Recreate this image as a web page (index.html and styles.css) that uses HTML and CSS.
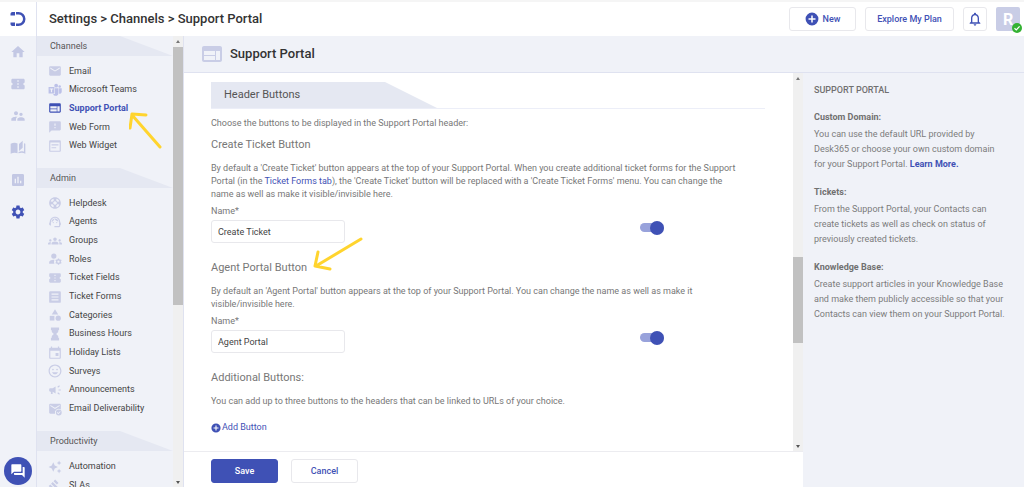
FILE: index.html
```html
<!DOCTYPE html>
<html lang="en">
<head>
<meta charset="utf-8">
<meta name="viewport" content="width=device-width, initial-scale=1">
<title>Support Portal</title>
<link rel="stylesheet" href="styles.css">
</head>
<body>
<svg class="sprite" aria-hidden="true">
  <symbol id="i-home" viewBox="0 0 24 24"><path d="M10 20v-6h4v6h5v-8h3L12 3 2 12h3v8z"/></symbol>
  <symbol id="i-ticket" viewBox="0 0 24 24"><path d="M22 10V6c0-1.11-.9-2-2-2H4c-1.1 0-2 .89-2 2v4c1.1 0 2 .9 2 2s-.9 2-2 2v4c0 1.1.9 2 2 2h16c1.1 0 2-.9 2-2v-4c-1.1 0-2-.9-2-2s.9-2 2-2zm-9 7.500h-2v-2h2v2zm0-4.500h-2v-2h2v2zm0-4.500h-2v-2h2v2z"/></symbol>
  <symbol id="i-people" viewBox="0 0 24 24"><path d="M16.500 12c1.380 0 2.490-1.120 2.490-2.500S17.880 7 16.500 7 14 8.120 14 9.500s1.120 2.500 2.500 2.500zM9 11c1.660 0 2.990-1.340 2.990-3S10.660 5 9 5 6 6.340 6 8s1.340 3 3 3zm7.500 3c-1.830 0-5.500.920-5.500 2.750V19h11v-2.250c0-1.830-3.670-2.750-5.500-2.750zM9 13c-2.330 0-7 1.170-7 3.500V19h7v-2.250c0-.850.330-2.340 2.370-3.470C10.500 13.100 9.660 13 9 13z"/></symbol>
  <symbol id="i-book" viewBox="0 0 24 24"><path d="M1 5.500C3 4.500 5 4 7 4c1.500 0 3 .400 4.300 1.200V20C10 19.300 8.500 19 7 19c-2 0-4 .500-6 1.500zM19 1l-5.500 5v10.500L19 11.500zM21 4.800v12.700c-1.100-.400-2.300-.500-3.500-.500-1.700 0-3.500.500-4.800 1.300V20c1.500-.800 3.200-1 4.800-1 1.900 0 3.800.500 5.500 1.500V5.800c-.600-.400-1.300-.800-2-1z"/></symbol>
  <symbol id="i-chart" viewBox="0 0 24 24"><path d="M19 3H5c-1.100 0-2 .9-2 2v14c0 1.100.9 2 2 2h14c1.100 0 2-.9 2-2V5c0-1.100-.9-2-2-2zM9 17H7v-7h2v7zm4 0h-2V7h2v10zm4 0h-2v-4h2v4z"/></symbol>
  <symbol id="i-gear" viewBox="0 0 24 24"><path d="M19.140 12.940c.040-.300.060-.610.060-.940 0-.320-.020-.640-.070-.940l2.030-1.580c.180-.140.230-.410.120-.610l-1.920-3.320c-.120-.220-.370-.290-.590-.220l-2.390.960c-.500-.380-1.030-.700-1.620-.940l-.360-2.540c-.040-.240-.240-.410-.480-.410h-3.840c-.240 0-.430.170-.470.410l-.360 2.540c-.590.240-1.130.570-1.620.940l-2.390-.960c-.220-.080-.470 0-.590.220L2.740 8.870c-.120.210-.080.470.120.610l2.030 1.580c-.050.300-.090.630-.090.940s.020.640.070.940l-2.030 1.580c-.180.140-.230.410-.120.610l1.920 3.320c.120.220.370.290.590.220l2.390-.960c.500.380 1.030.700 1.620.940l.360 2.540c.050.240.240.410.480.410h3.840c.240 0 .440-.170.470-.410l.360-2.540c.590-.240 1.130-.560 1.620-.940l2.390.960c.220.080.470 0 .590-.220l1.920-3.320c.120-.220.070-.470-.120-.610l-2.010-1.580zM12 15.600c-1.980 0-3.600-1.620-3.600-3.600s1.620-3.600 3.600-3.600 3.600 1.620 3.600 3.600-1.620 3.600-3.600 3.600z"/></symbol>
  <symbol id="i-mail" viewBox="0 0 24 24"><path d="M20 4H4c-1.100 0-2 .9-2 2v12c0 1.100.9 2 2 2h16c1.100 0 2-.9 2-2V6c0-1.100-.9-2-2-2zm0 4l-8 5-8-5V6l8 5 8-5v2z"/></symbol>
  <symbol id="i-teams" viewBox="0 0 24 24"><path fill-rule="evenodd" d="M1 7h10v11H1zM3 9.300v1.800h2V16h2v-4.900h2V9.300z"/><circle cx="14" cy="4.500" r="3.200"/><circle cx="20" cy="6" r="2.200"/><path d="M12 9h6v8c0 3-2 5-4.500 5S9.500 21.500 9 19h3zM19 9h4.500v6c0 2-1.500 3.500-4.500 3.500z"/></symbol>
  <symbol id="i-web" viewBox="0 0 24 24"><path d="M20 4H4c-1.100 0-2 .9-2 2v12c0 1.100.9 2 2 2h16c1.100 0 2-.9 2-2V6c0-1.100-.9-2-2-2zm-5 14H4v-4h11v4zm0-5H4V9h11v4zm5 5h-4V9h4v9z"/></symbol>
  <symbol id="i-feedback" viewBox="0 0 24 24"><path d="M20 2H4c-1.100 0-2 .9-2 2v18l4-4h14c1.100 0 2-.9 2-2V4c0-1.100-.9-2-2-2zm-7 12h-2v-2h2v2zm0-4h-2V6h2v4z"/></symbol>
  <symbol id="i-widget" viewBox="0 0 24 24"><path d="M20 2H4c-1.100 0-2 .9-2 2v16c0 1.100.9 2 2 2h16c1.100 0 2-.9 2-2V4c0-1.100-.9-2-2-2zm0 18H4V6h16v14zm-2-9H6V9h12v2zm-4 5H6v-2h8v2z"/></symbol>
  <symbol id="i-support" viewBox="0 0 24 24"><path d="M12 2C6.480 2 2 6.480 2 12s4.480 10 10 10 10-4.480 10-10S17.520 2 12 2zm7.460 7.120l-2.780 1.150c-.510-1.360-1.580-2.440-2.950-2.940l1.150-2.780c2.100.800 3.770 2.470 4.580 4.570zM12 15c-1.660 0-3-1.340-3-3s1.340-3 3-3 3 1.340 3 3-1.340 3-3 3zM9.130 4.540l1.170 2.780c-1.380.500-2.470 1.590-2.980 2.970L4.540 9.130c.810-2.110 2.480-3.780 4.590-4.590zM4.540 14.870l2.780-1.150c.510 1.380 1.590 2.460 2.970 2.960l-1.170 2.780c-2.100-.810-3.770-2.480-4.580-4.590zm10.340 4.590l-1.150-2.780c1.370-.510 2.450-1.590 2.950-2.970l2.780 1.170c-.810 2.100-2.480 3.770-4.580 4.580z"/></symbol>
  <symbol id="i-agent" viewBox="0 0 24 24"><path d="M21 12.220C21 6.730 16.740 3 12 3c-4.690 0-9 3.650-9 9.280-.600.340-1 .980-1 1.720v2c0 1.100.9 2 2 2h1v-6.100c0-3.870 3.130-7 7-7s7 3.130 7 7V19h-8v2h8c1.100 0 2-.9 2-2v-1.220c.590-.310 1-.920 1-1.640v-2.300c0-.700-.410-1.310-1-1.620z"/><circle cx="9" cy="13" r="1"/><circle cx="15" cy="13" r="1"/><path d="M18 11.030C17.520 8.180 15.040 6 12.050 6c-3.030 0-6.290 2.510-6.030 6.450 2.470-1.010 4.330-3.210 4.860-5.890 1.310 2.630 4 4.440 7.120 4.470z"/></symbol>
  <symbol id="i-groups" viewBox="0 0 24 24"><path d="M12 12.750c1.630 0 3.070.390 4.240.900 1.080.480 1.760 1.560 1.760 2.730V18H6v-1.610c0-1.180.680-2.260 1.760-2.730 1.170-.520 2.610-.910 4.240-.910zM4 13c1.100 0 2-.9 2-2s-.9-2-2-2-2 .9-2 2 .9 2 2 2zm1.130 1.100C4.760 14.040 4.390 14 4 14c-.990 0-1.930.210-2.780.580C.480 14.900 0 15.620 0 16.430V18h4.500v-1.610c0-.830.230-1.610.630-2.290zM20 13c1.100 0 2-.9 2-2s-.9-2-2-2-2 .9-2 2 .9 2 2 2zm4 3.430c0-.810-.480-1.530-1.220-1.850C21.930 14.210 20.990 14 20 14c-.390 0-.760.040-1.130.100.400.680.630 1.460.630 2.290V18H24v-1.570zM12 6c1.660 0 3 1.340 3 3s-1.340 3-3 3-3-1.340-3-3 1.340-3 3-3z"/></symbol>
  <symbol id="i-roles" viewBox="0 0 24 24"><circle cx="10" cy="7" r="4.500"/><path d="M11 13.200C6 12.700 2 15 2 17.500V20h9c-.900-2.200-.800-4.600 0-6.800z"/><path fill-rule="evenodd" d="M17 11h2l.4 1.600 1.300.7 1.600-.5 1 1.700-1.200 1.200v1.500l1.200 1.200-1 1.700-1.600-.4-1.300.7L19 22h-2l-.4-1.600-1.300-.7-1.600.4-1-1.700 1.200-1.200v-1.500l-1.200-1.200 1-1.700 1.600.5 1.300-.7zm1 3.500a2 2 0 100 4 2 2 0 000-4z"/></symbol>
  <symbol id="i-forms" viewBox="0 0 24 24"><path fill-rule="evenodd" d="M4 2h16a2 2 0 012 2v16a2 2 0 01-2 2H4a2 2 0 01-2-2V4a2 2 0 012-2zm2 4v2h12V6zm0 5v2h12v-2zm0 5v2h12v-2z"/></symbol>
  <symbol id="i-category" viewBox="0 0 24 24"><path d="M12 2l-5.500 9h11z"/><circle cx="17.500" cy="17.500" r="4.500"/><path d="M3 13.500h8v8H3z"/></symbol>
  <symbol id="i-hourglass" viewBox="0 0 24 24"><path d="M5 1h14v4.500h-1.500v3L14 12l3.500 3.500v3H19V23H5v-4.500h1.500v-3L10 12 6.500 8.500v-3H5z"/></symbol>
  <symbol id="i-event" viewBox="0 0 24 24"><path d="M18 12h-5v5h5v-5zM17 1v2H7V1H5v2H4c-1.110 0-2 .9-2 2v15c0 1.100.890 2 2 2h16c1.100 0 2-.9 2-2V5c0-1.100-.9-2-2-2h-1V1h-2zm3 19H4V8h16v12z"/></symbol>
  <symbol id="i-smile" viewBox="0 0 24 24"><path d="M11.990 1C5.900 1 1 5.900 1 12s4.900 11 10.990 11C18.100 23 23 18.100 23 12S18.100 1 11.990 1zM12 21c-5 0-9-4-9-9s4-9 9-9 9 4 9 9-4 9-9 9zm3.500-10c.830 0 1.500-.670 1.500-1.500S16.330 8 15.500 8 14 8.670 14 9.500s.670 1.500 1.500 1.500zm-7 0c.830 0 1.500-.670 1.500-1.500S9.330 8 8.500 8 7 8.670 7 9.500 7.670 11 8.500 11zm3.500 6.500c2.330 0 4.310-1.460 5.110-3.500H6.890c.800 2.040 2.780 3.500 5.110 3.500z"/></symbol>
  <symbol id="i-campaign" viewBox="0 0 24 24"><path d="M18 11v2h4v-2h-4zm-2 6.610c.960.710 2.210 1.650 3.200 2.390.400-.530.800-1.070 1.200-1.600-.990-.740-2.240-1.680-3.200-2.400-.400.540-.800 1.080-1.200 1.610zM20.400 5.600c-.400-.530-.800-1.070-1.200-1.600-.990.740-2.240 1.680-3.200 2.400.400.530.800 1.070 1.200 1.600.960-.720 2.210-1.650 3.200-2.400zM4 9c-1.100 0-2 .9-2 2v2c0 1.100.9 2 2 2h1v4h3v-4l5 3V6L8 9H4z"/></symbol>
  <symbol id="i-mailcheck" viewBox="0 0 24 24"><path d="M20 3H4a2 2 0 00-2 2v13c0 1.100.9 2 2 2h8a6.500 6.500 0 0110-7V5a2 2 0 00-2-2zm0 4l-8 5-8-5V5l8 5 8-5z"/><path fill-rule="evenodd" d="M18.500 13a5 5 0 100 10 5 5 0 000-10zm-.8 7.800L15 18.200l1-1 1.700 1.600 3-3 1 1z"/></symbol>
  <symbol id="i-sparkle" viewBox="0 0 24 24"><path d="M19 9l1.250-2.750L23 5l-2.750-1.250L19 1l-1.250 2.750L15 5l2.750 1.250L19 9zm0 6l-1.250 2.750L15 19l2.750 1.250L19 23l1.250-2.750L23 19l-2.750-1.250L19 15zm-7.500-5.500L9 4 6.500 9.500 1 12l5.500 2.500L9 20l2.500-5.500L17 12l-5.500-2.500z"/></symbol>
  <symbol id="i-gavel" viewBox="0 0 24 24"><path d="M5.200 8l2.900-2.900 14.200 14.200-2.900 2.900zM12.300 1l5.700 5.700-2.900 2.800-5.600-5.700zM4 9.300L9.700 15l-2.900 2.800-5.600-5.700zM1 21h12v2H1z"/></symbol>
  <symbol id="i-bell" viewBox="0 0 24 24"><path d="M12 22c1.100 0 2-.9 2-2h-4c0 1.100.9 2 2 2zm6-6v-5c0-3.070-1.630-5.640-4.500-6.320V4c0-.830-.670-1.500-1.500-1.500s-1.500.670-1.500 1.500v.680C7.640 5.360 6 7.920 6 11v5l-2 2v1h16v-1l-2-2zm-2 1H8v-6c0-2.480 1.510-4.500 4-4.500s4 2.020 4 4.500v6z"/></symbol>
  <symbol id="i-plus" viewBox="0 0 24 24"><path d="M12 1a11 11 0 100 22 11 11 0 000-22zm6 12.300h-4.700V18h-2.600v-4.700H6v-2.600h4.700V6h2.600v4.700H18z"/></symbol>
  <symbol id="i-forum" viewBox="0 0 24 24"><path d="M21 6h-2v9H6v2c0 .550.450 1 1 1h11l4 4V7c0-.550-.450-1-1-1zm-4 6V3c0-.550-.450-1-1-1H3c-.550 0-1 .450-1 1v14l4-4h10c.550 0 1-.450 1-1z"/></symbol>
</svg>

<div class="app">
  <header class="topbar">
    <a class="logo" href="#" aria-label="Desk365 home">
      <svg viewBox="0 0 16 16" aria-hidden="true"><path d="M.5 4.500V3C.5 1.800 1.300 1 2.500 1H5v3.500zM6 1h2.500a7 7 0 010 14H6v-2.500h2.500a4.500 4.500 0 000-9H6zM.5 11.500H5V15H2.500c-1.200 0-2-.8-2-2z"/></svg>
    </a>
    <h1 class="crumbs">Settings &gt; Channels &gt; Support Portal</h1>
    <div class="actions">
      <button class="btn btn-new" type="button"><svg class="icon" aria-hidden="true"><use href="#i-plus"/></svg>New</button>
      <button class="btn btn-plan" type="button">Explore My Plan</button>
      <button class="btn btn-bell" type="button" aria-label="Notifications"><svg class="icon" aria-hidden="true"><use href="#i-bell"/></svg></button>
      <button class="avatar" type="button">R
        <svg class="badge" viewBox="0 0 10 10" aria-hidden="true"><circle cx="5" cy="5" r="5"/><path d="M2.500 5.200l1.800 1.700 3.300-3.600"/></svg>
      </button>
    </div>
  </header>

  <div class="body">
    <nav class="rail" aria-label="Main">
      <a href="#" aria-label="Home"><svg class="icon"><use href="#i-home"/></svg></a>
      <a href="#" aria-label="Tickets"><svg class="icon"><use href="#i-ticket"/></svg></a>
      <a href="#" aria-label="Contacts"><svg class="icon"><use href="#i-people"/></svg></a>
      <a href="#" aria-label="Knowledge base"><svg class="icon"><use href="#i-book"/></svg></a>
      <a href="#" aria-label="Reports"><svg class="icon"><use href="#i-chart"/></svg></a>
      <a class="active" href="#" aria-label="Settings"><svg class="icon"><use href="#i-gear"/></svg></a>
      <button class="chat" type="button" aria-label="Chat"><svg class="icon"><use href="#i-forum"/></svg></button>
    </nav>

    <nav class="sidebar" aria-label="Settings">
      <div class="menu">
        <h2 class="band">Channels</h2>
        <ul class="list list-short">
          <li><a href="#"><svg class="icon"><use href="#i-mail"/></svg>Email</a></li>
          <li><a href="#"><svg class="icon teams"><use href="#i-teams"/></svg>Microsoft Teams</a></li>
          <li><a class="active" href="#"><svg class="icon"><use href="#i-web"/></svg>Support Portal</a></li>
          <li><a href="#"><svg class="icon"><use href="#i-feedback"/></svg>Web Form</a></li>
          <li><a href="#"><svg class="icon"><use href="#i-widget"/></svg>Web Widget</a></li>
        </ul>
        <h2 class="band">Admin</h2>
        <ul class="list list-long">
          <li><a href="#"><svg class="icon"><use href="#i-support"/></svg>Helpdesk</a></li>
          <li><a href="#"><svg class="icon"><use href="#i-agent"/></svg>Agents</a></li>
          <li><a href="#"><svg class="icon"><use href="#i-groups"/></svg>Groups</a></li>
          <li><a href="#"><svg class="icon"><use href="#i-roles"/></svg>Roles</a></li>
          <li><a href="#"><svg class="icon"><use href="#i-ticket"/></svg>Ticket Fields</a></li>
          <li><a href="#"><svg class="icon"><use href="#i-forms"/></svg>Ticket Forms</a></li>
          <li><a href="#"><svg class="icon"><use href="#i-category"/></svg>Categories</a></li>
          <li><a href="#"><svg class="icon"><use href="#i-hourglass"/></svg>Business Hours</a></li>
          <li><a href="#"><svg class="icon"><use href="#i-event"/></svg>Holiday Lists</a></li>
          <li><a href="#"><svg class="icon"><use href="#i-smile"/></svg>Surveys</a></li>
          <li><a href="#"><svg class="icon"><use href="#i-campaign"/></svg>Announcements</a></li>
          <li><a href="#"><svg class="icon"><use href="#i-mailcheck"/></svg>Email Deliverability</a></li>
        </ul>
        <h2 class="band">Productivity</h2>
        <ul class="list list-tail">
          <li><a href="#"><svg class="icon"><use href="#i-sparkle"/></svg>Automation</a></li>
          <li><a href="#"><svg class="icon"><use href="#i-gavel"/></svg>SLAs</a></li>
        </ul>
      </div>
      <div class="scroll scroll-side" aria-hidden="true"><span class="up"></span><span class="track"><span class="thumb"></span></span><span class="down"></span></div>
    </nav>

    <main class="page">
      <div class="titlebar"><svg class="icon" aria-hidden="true"><use href="#i-web"/></svg><h2>Support Portal</h2></div>
      <div class="split">
        <form class="editor">
          <div class="pane">
            <div class="fields">
              <div class="tab"><h3>Header Buttons</h3></div>
              <p class="intro">Choose the buttons to be displayed in the Support Portal header:</p>

              <h4>Create Ticket Button</h4>
              <p>By default a 'Create Ticket' button appears at the top of your Support Portal. When you create additional ticket forms for the Support Portal (in the <a href="#">Ticket Forms tab</a>), the 'Create Ticket' button will be replaced with a 'Create Ticket Forms' menu. You can change the name as well as make it visible/invisible here.</p>
              <label class="name" for="create-name">Name*</label>
              <div class="row">
                <input class="text" id="create-name" type="text" value="Create Ticket">
                <input class="switch" type="checkbox" role="switch" aria-label="Show Create Ticket button" checked>
              </div>

              <h4>Agent Portal Button</h4>
              <p>By default an 'Agent Portal' button appears at the top of your Support Portal. You can change the name as well as make it visible/invisible here.</p>
              <label class="name" for="agent-name">Name*</label>
              <div class="row">
                <input class="text" id="agent-name" type="text" value="Agent Portal">
                <input class="switch" type="checkbox" role="switch" aria-label="Show Agent Portal button" checked>
              </div>

              <h4>Additional Buttons:</h4>
              <p>You can add up to three buttons to the headers that can be linked to URLs of your choice.</p>
              <button class="add" type="button"><svg class="icon" aria-hidden="true"><use href="#i-plus"/></svg>Add Button</button>
            </div>
            <div class="scroll scroll-main" aria-hidden="true"><span class="up"></span><span class="track"><span class="thumb"></span></span><span class="down"></span></div>
          </div>
          <div class="footer">
            <button class="btn save" type="button">Save</button>
            <button class="btn cancel" type="button">Cancel</button>
          </div>
        </form>
        <aside class="help">
          <h3>SUPPORT PORTAL</h3>
          <h4>Custom Domain:</h4>
          <p>You can use the default URL provided by Desk365 or choose your own custom domain for your Support Portal. <a href="#">Learn More.</a></p>
          <h4>Tickets:</h4>
          <p>From the Support Portal, your Contacts can create tickets as well as check on status of previously created tickets.</p>
          <h4>Knowledge Base:</h4>
          <p>Create support articles in your Knowledge Base and make them publicly accessible so that your Contacts can view them on your Support Portal.</p>
        </aside>
      </div>
    </main>
  </div>
</div>

<svg class="arrow arrow-nav" viewBox="0 0 34 40" aria-hidden="true"><path d="M31 36L3 4M1 17L3 3L17 4"/></svg>
<svg class="arrow arrow-heading" viewBox="0 0 52 36" aria-hidden="true"><path d="M48 3L3 30M5 16L2 30L17 33"/></svg>
</body>
</html>
```
FILE: styles.css
```css
:root {
  --blue: #3f51b5;
  --pale: #f0f2f8;
  --band: #e5e8f2;
  --line: #dfe2f0;
  --icon: #c9cde6;
}

* { box-sizing: border-box; }

body {
  margin: 0;
  font: 9px/13px Roboto, "Liberation Sans", sans-serif;
  color: #777;
  background: #fff;
}

h1, h2, h3, h4, p, ul { margin: 0; padding: 0; font-weight: 400; }
a { color: var(--blue); text-decoration: none; }
button, input { font: inherit; margin: 0; }
button { cursor: pointer; }
.sprite { position: absolute; width: 0; height: 0; }
.icon { width: 14px; height: 14px; flex: none; fill: currentColor; }

.app { display: flex; flex-direction: column; height: 100vh; overflow: hidden; }

.topbar {
  display: flex;
  align-items: center;
  flex: none;
  height: 36px;
  padding-right: 4px;
  border-top: 2px solid #f5f5f5;
}
.logo {
  display: flex;
  align-items: center;
  justify-content: center;
  align-self: stretch;
  width: 37px;
  border-right: 1px solid var(--line);
}
.logo svg { width: 16px; height: 16px; fill: var(--blue); }
.crumbs { flex: 1; padding-left: 12px; font-size: 13px; line-height: 20px; font-weight: 500; color: #333; }
.actions { display: flex; gap: 9px; }
.btn {
  display: flex;
  align-items: center;
  justify-content: center;
  height: 24px;
  padding: 0;
  border: 1px solid #e8e8ec;
  border-radius: 3px;
  background: #fff;
  color: var(--blue);
  font-weight: 500;
}
.btn-new { width: 67px; gap: 4px; }
.btn-plan { width: 89px; }
.btn-bell { width: 24px; }
.btn-bell .icon { width: 16px; height: 16px; }
.avatar {
  position: relative;
  width: 24px;
  height: 24px;
  padding: 0;
  border: 0;
  border-radius: 2px;
  background: #c9cde6;
  color: #fff;
  font-size: 16px;
  font-weight: 700;
}
.badge { position: absolute; right: -2px; bottom: -2px; width: 10px; height: 10px; }
.badge circle { fill: #34b233; }
.badge path { fill: none; stroke: #fff; stroke-width: 1.2; }

.body { display: flex; flex: 1; min-height: 0; }

.rail {
  display: flex;
  flex-direction: column;
  align-items: center;
  gap: 16px;
  flex: none;
  width: 37px;
  padding: 8px 0 2px;
  background: var(--pale);
  border-right: 1px solid var(--line);
}
.rail .icon { width: 16px; height: 16px; }
.rail a { display: flex; color: #c3c8e4; }
.rail a.active { color: var(--blue); }
.chat {
  display: flex;
  align-items: center;
  justify-content: center;
  flex: none;
  width: 28px;
  height: 28px;
  margin-top: auto;
  padding: 0;
  border: 0;
  border-radius: 50%;
  background: var(--blue);
  color: #fff;
}

.sidebar { display: flex; flex: none; width: 147px; background: var(--pale); border-right: 1px solid var(--line); }
.menu { flex: 1; min-width: 0; overflow: hidden; }
.band {
  height: 20px;
  padding-left: 13px;
  background: var(--band);
  clip-path: polygon(0 0, 61% 0, 100% 100%, 0 100%);
  font-size: 9px;
  line-height: 20px;
  color: #555;
}
.list { display: grid; grid-auto-rows: 1fr; margin: 6px 0 13px; list-style: none; }
.list-short { height: 93px; }
.list-long { height: 224px; }
.list-tail { height: 38px; }
.list a { display: flex; align-items: center; gap: 7px; height: 100%; padding-left: 11px; color: #444; }
.list .icon { color: var(--icon); }
.list .teams { color: #bcc1e8; }
.list a.active { color: var(--blue); font-weight: 700; }
.list a.active .icon { color: var(--blue); }

.scroll { display: flex; flex-direction: column; align-items: center; flex: none; width: 10px; padding: 4px 0 3px; background: #f0f0f0; }
.scroll .up, .scroll .down { border: 2px solid transparent; }
.scroll .up { border-top: 0; border-bottom: 3px solid #777; }
.scroll .down { border-bottom: 0; border-top: 3px solid #555; }
.track { display: flex; flex-direction: column; flex: 1; width: 100%; min-height: 0; padding: 4px 0; }
.thumb { background: #c1c1c1; }
.scroll-side .thumb { height: 60%; }
.scroll-main .track { justify-content: center; padding: 86px 0 11px; }
.scroll-main .thumb { height: 32%; }

.page { display: flex; flex-direction: column; flex: 1; min-width: 0; }
.titlebar {
  display: flex;
  align-items: center;
  gap: 6px;
  flex: none;
  height: 37px;
  padding-left: 16px;
  background: var(--pale);
  border-bottom: 1px solid var(--line);
}
.titlebar .icon { width: 24px; height: 24px; color: var(--icon); }
.titlebar h2 { font-size: 13px; line-height: 20px; font-weight: 500; color: #333; }
.split { display: flex; flex: 1; min-height: 0; }

.editor { display: flex; flex-direction: column; flex: 1; min-width: 0; }
.pane { display: flex; flex: 1; min-height: 0; }
.fields { flex: 1; min-width: 0; padding: 9px 28px 0 27px; overflow: hidden; }
.fields p { max-width: 530px; }
.tab { border-bottom: 1px solid #eceef8; }
.tab h3 {
  width: 226px;
  height: 26px;
  padding-left: 13px;
  background: var(--band);
  clip-path: polygon(0 0, 77% 0, 100% 100%, 0 100%);
  font-size: 11px;
  line-height: 26px;
  color: #555;
}
.fields h4 { margin: 18px 0 10px; font-size: 11px; line-height: 14px; }
.fields .intro { margin: 8px 0 -10px; }
.name { display: block; margin-top: 4px; }
.row { display: flex; align-items: flex-start; justify-content: space-between; margin-top: 2px; padding-right: 101px; }
.text {
  width: 134px;
  height: 23px;
  padding: 0 6px;
  border: 1px solid #e8e8ec;
  border-radius: 3px;
  background: #fff;
  color: #444;
}
.switch { position: relative; width: 24px; height: 14px; margin-top: 1px; appearance: none; cursor: pointer; }
.switch::before { content: ""; position: absolute; inset: 2px 0 3px; border-radius: 5px; background: #98a2db; }
.switch::after { content: ""; position: absolute; top: 0; right: 0; width: 14px; height: 14px; border-radius: 50%; background: var(--blue); }
.add { display: flex; align-items: center; gap: 1px; margin-top: 13px; padding: 0; border: 0; background: none; color: var(--blue); }
.add .icon { width: 10px; height: 10px; }

.footer { display: flex; gap: 13px; flex: none; padding: 7px 27px 4px; border-top: 1px solid #ececf0; }
.save, .cancel { width: 67px; }
.save { background: var(--blue); border-color: var(--blue); color: #fff; }

.help { flex: none; width: 221px; padding: 10px 10px 0 11px; background: var(--pale); line-height: 15px; color: #7c7c7c; }
.help h3 { margin-bottom: 12px; font-size: 9px; font-weight: 500; color: #707070; }
.help h4 { margin-bottom: 2px; font-size: 9px; font-weight: 700; color: #707070; }
.help p { max-width: 193px; margin-bottom: 13px; }
.help a { font-weight: 700; }

.arrow { position: absolute; fill: none; stroke: #ffd42e; stroke-width: 3; stroke-linecap: round; stroke-linejoin: round; }
.arrow-nav { left: 129px; top: 111px; width: 34px; height: 40px; }
.arrow-heading { left: 313px; top: 236px; width: 52px; height: 36px; }
```
